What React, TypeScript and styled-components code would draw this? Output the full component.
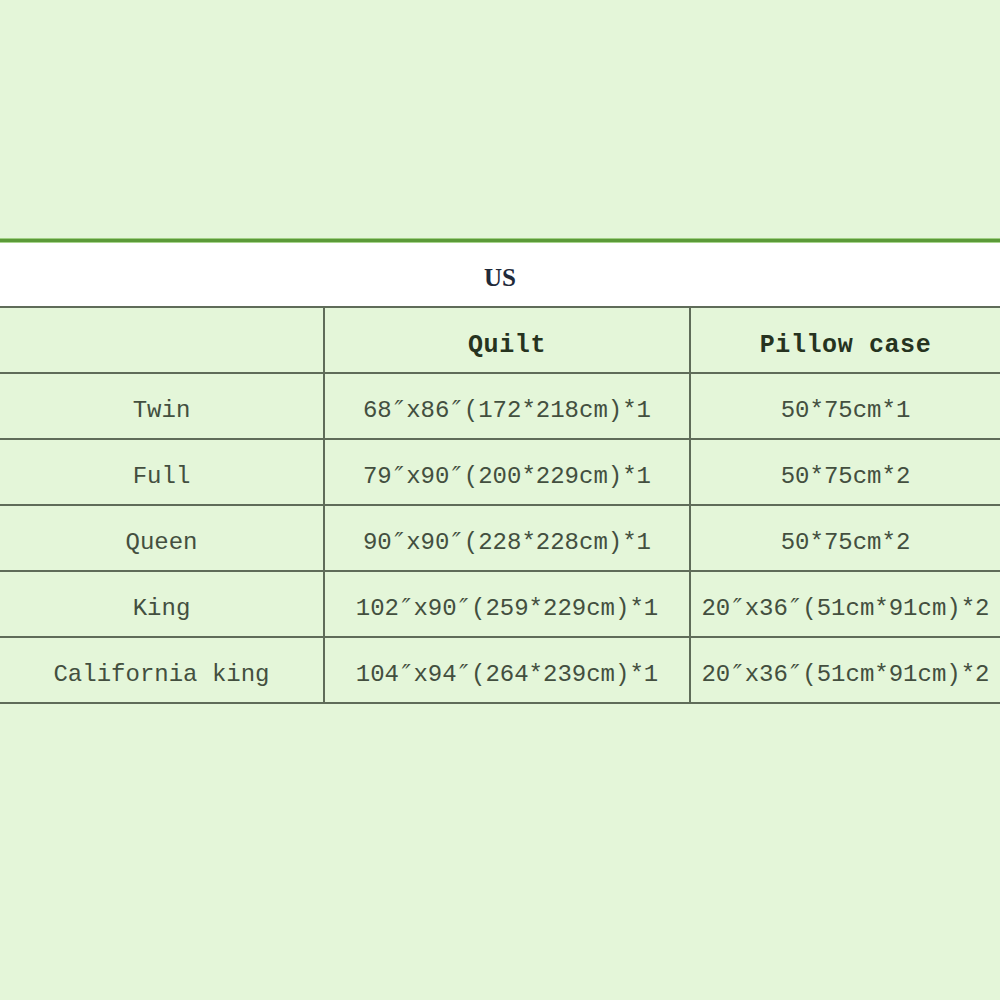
import React from "react";
import styled, { createGlobalStyle } from "styled-components";

const Global = createGlobalStyle`
  html, body { margin: 0; padding: 0; background: #e4f6d9; }
  #root { width: 1000px; height: 1000px; }
`;

const Page = styled.div`
  width: 1000px;
  height: 1000px;
  background: #e4f6d9;
  padding-top: 238px;
  box-sizing: border-box;
`;

const GreenRule = styled.div`
  height: 3px;
  background: #5b9a38;
  border-top: 1px solid #9fcf83;
  border-bottom: 1px solid #a8d58e;
`;

const TitleBand = styled.div`
  height: 63px;
  padding-top: 7px;
  box-sizing: border-box;
  background: #ffffff;
  display: flex;
  align-items: center;
  justify-content: center;
  font-family: "Liberation Serif", serif;
  font-weight: bold;
  font-size: 25px;
  color: #1f2a3a;
`;

const Table = styled.div`
  display: grid;
  grid-template-columns: 323px 366px 1fr;
  border-top: 2px solid #5f6c59;
`;

const Cell = styled.div<{ $first?: boolean; $head?: boolean }>`
  height: 66px;
  padding-top: ${(p) => (p.$head ? "10px" : "8px")};
  box-sizing: border-box;
  display: flex;
  align-items: center;
  justify-content: center;
  border-bottom: 2px solid #5f6c59;
  border-left: ${(p) => (p.$first ? "none" : "2px solid #5f6c59")};
  font-family: "Liberation Mono", "DejaVu Sans Mono", monospace;
  font-size: ${(p) => (p.$head ? "25px" : "24px")};
  font-weight: ${(p) => (p.$head ? "bold" : "normal")};
  letter-spacing: ${(p) => (p.$head ? "0.6px" : "0")};
  color: ${(p) => (p.$head ? "#26331f" : "#434f3f")};
  white-space: nowrap;
`;

const Prime = styled.span`
  display: inline-block;
  width: 0.6em;
  text-align: center;
  font-family: "DejaVu Serif", "Liberation Serif", serif;
  font-style: italic;
`;

function Txt({ s }: { s: string }) {
  const parts = s.split("″");
  return (
    <>
      {parts.map((p, i) => (
        <React.Fragment key={i}>
          {p}
          {i < parts.length - 1 && <Prime>″</Prime>}
        </React.Fragment>
      ))}
    </>
  );
}

const rows: [string, string, string][] = [
  ["Twin", "68″x86″(172*218cm)*1", "50*75cm*1"],
  ["Full", "79″x90″(200*229cm)*1", "50*75cm*2"],
  ["Queen", "90″x90″(228*228cm)*1", "50*75cm*2"],
  ["King", "102″x90″(259*229cm)*1", "20″x36″(51cm*91cm)*2"],
  ["California king", "104″x94″(264*239cm)*1", "20″x36″(51cm*91cm)*2"],
];

export default function App() {
  return (
    <>
      <Global />
      <Page>
        <GreenRule />
        <TitleBand>US</TitleBand>
        <Table>
          <Cell $first $head />
          <Cell $head>Quilt</Cell>
          <Cell $head>Pillow case</Cell>
          {rows.map((r) => (
            <React.Fragment key={r[0]}>
              <Cell $first>{r[0]}</Cell>
              <Cell>
                <Txt s={r[1]} />
              </Cell>
              <Cell>
                <Txt s={r[2]} />
              </Cell>
            </React.Fragment>
          ))}
        </Table>
      </Page>
    </>
  );
}
